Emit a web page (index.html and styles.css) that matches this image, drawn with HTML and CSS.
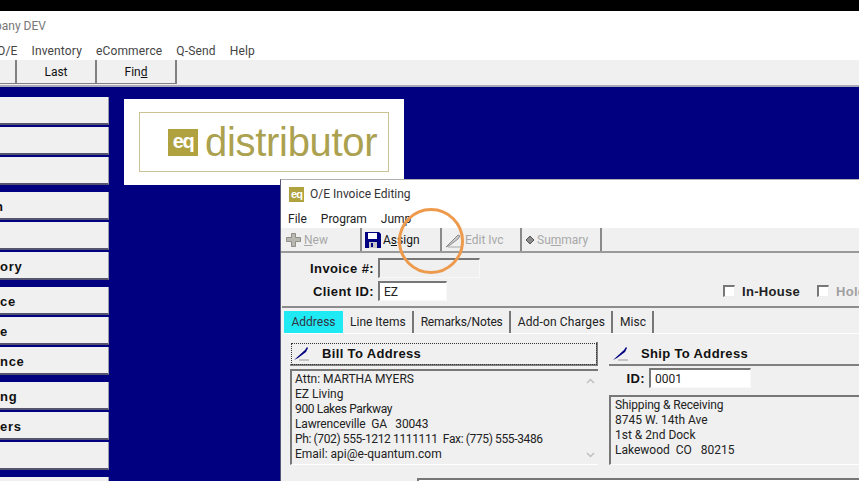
FILE: index.html
```html
<!DOCTYPE html>
<html lang="en">
<head>
    <meta charset="UTF-8">
    <meta name="viewport" content="width=device-width, initial-scale=1.0">
    <title>O/E Invoice Editing</title>
    <link rel="stylesheet" href="styles.css">
</head>
<body>

<div class="topbar"></div>
<div class="app-title">pany DEV</div>
<div class="app-menu">
    <span class="menu-oe">O/E</span>
    <span>Inventory</span>
    <span>eCommerce</span>
    <span>Q-Send</span>
    <span>Help</span>
</div>
<div class="app-toolbar">
    <a class="tool tool-cut"></a>
    <a class="tool">Last</a>
    <a class="tool">Fin<u>d</u></a>
</div>

<div class="desktop">
    <div class="sidebar">
        <div class="side-group">
            <a class="side-button"></a>
            <a class="side-button"></a>
            <a class="side-button"></a>
        </div>
        <div class="side-group">
            <a class="side-button side-n">n</a>
            <a class="side-button"></a>
            <a class="side-button">ory</a>
        </div>
        <div class="side-group">
            <a class="side-button">ce</a>
            <a class="side-button">e</a>
            <a class="side-button">nce</a>
        </div>
        <div class="side-group">
            <a class="side-button">ng</a>
            <a class="side-button">ers</a>
            <a class="side-button"></a>
        </div>
        <div class="side-group">
            <a class="side-button"></a>
        </div>
    </div>

    <div class="logo-card">
        <div class="logo-frame">
            <span class="eq-mark">eq</span>
            <span class="logo-word">distributor</span>
        </div>
    </div>

    <div class="window">
        <div class="win-title">
            <span class="eq-mark eq-small">eq</span>
            <span>O/E Invoice Editing</span>
        </div>
        <div class="win-menu">
            <span>File</span>
            <span>Program</span>
            <span>Jump</span>
        </div>
        <div class="win-toolbar">
            <a class="win-tool disabled">
                <svg width="17" height="16" viewBox="0 0 17 16"><path d="M6.500 1.500h4v4h5v4h-5v5h-4v-5h-5v-4h5z" fill="#b8b8b0" stroke="#8f8f88" stroke-linejoin="round"/></svg>
                <span><u>N</u>ew</span>
            </a>
            <a class="win-tool">
                <svg width="16" height="16" viewBox="0 0 16 16"><path d="M0 0h14l2 2v14H0z" fill="#000080"/><path d="M3 1h9v6H3z" fill="#fff"/><path d="M4 10h8v6H4z" fill="#c8c8c8"/><path d="M6 11h2v4H6z" fill="#000080"/></svg>
                <span>A<u>s</u>sign</span>
            </a>
            <a class="win-tool disabled">
                <svg width="18" height="16" viewBox="0 0 18 16"><path d="M1 15L13 3l2 1-2 3-8 6z" fill="#c8c8c4" stroke="#8c8c8c"/><path d="M3 15h14" stroke="#a8a8a8"/></svg>
                <span>Edit Ivc</span>
            </a>
            <a class="win-tool disabled">
                <svg width="10" height="10" viewBox="0 0 10 10"><path d="M5 1l4 4-4 4-4-4z" fill="#8c8c8c" stroke="#555"/></svg>
                <span>Su<u>m</u>mary</span>
            </a>
        </div>

        <div class="win-body">
            <div class="head-fields">
                <div class="field-col">
                    <div class="field-row">
                        <label class="field-label">Invoice #:</label>
                        <div class="input input-invoice"></div>
                    </div>
                    <div class="field-row">
                        <label class="field-label">Client ID:</label>
                        <div class="input input-client">EZ</div>
                    </div>
                </div>
                <div class="checks">
                    <label class="check"><span class="box"></span>In-House</label>
                    <label class="check check-off"><span class="box"></span>Hold</label>
                </div>
            </div>

            <div class="tabs">
                <span class="tab tab-active">Address</span>
                <span class="tab">Line Items</span>
                <span class="tab tab-narrow">Remarks/Notes</span>
                <span class="tab tab-wide">Add-on Charges</span>
                <span class="tab">Misc</span>
            </div>

            <div class="panel">
                <div class="address-col bill-col">
                    <a class="addr-button focused">
                        <svg class="pen" width="18" height="15" viewBox="0 0 18 15"><path d="M1 14L12 4l2-3 1 1-2 4-8 6z" fill="#000080"/><path d="M6 14h10" stroke="#9a9a9a"/></svg>
                        <span>Bill To Address</span>
                    </a>
                    <div class="memo memo-bill">
                        <div>Attn: MARTHA MYERS<br>EZ Living<br><span class="tight">900 Lakes Parkway</span><br><span class="tight-less">Lawrenceville&nbsp; GA &nbsp; 30043</span><br><span class="tight-most">Ph: (702) 555-1212 1111111&nbsp; Fax: (775) 555-3486</span><br>Email: api@e-quantum.com</div>
                        <div class="memo-scroll">
                            <svg width="9" height="6" viewBox="0 0 9 6"><path d="M1 5l3.500-3.500L8 5" fill="none" stroke="#c0c0c0" stroke-width="1.500"/></svg>
                            <svg width="9" height="6" viewBox="0 0 9 6"><path d="M1 1l3.500 3.500L8 1" fill="none" stroke="#c0c0c0" stroke-width="1.500"/></svg>
                        </div>
                    </div>
                </div>
                <div class="address-col ship-col">
                    <a class="addr-button">
                        <svg class="pen" width="18" height="15" viewBox="0 0 18 15"><path d="M1 14L12 4l2-3 1 1-2 4-8 6z" fill="#000080"/><path d="M6 14h10" stroke="#9a9a9a"/></svg>
                        <span>Ship To Address</span>
                    </a>
                    <div class="field-row ship-id">
                        <label class="field-label">ID:</label>
                        <div class="input input-ship">0001</div>
                    </div>
                    <div class="memo memo-ship"><span class="tight-less">Shipping &amp; Receiving</span><br>8745 W. 14th Ave<br>1st &amp; 2nd Dock<br>Lakewood&nbsp; CO &nbsp; 80215</div>
                </div>
            </div>

            <div class="bottom-row">
                <div class="bottom-box"></div>
            </div>
        </div>
    </div>

    <div class="click-ring"></div>
</div>

</body>
</html>
```

FILE: styles.css
```css
html, body {
    height: 100%;
}
body {
    margin: 0;
    height: 481px;
    overflow: hidden;
    background-color: #000080;
    font-family: Roboto, Arial, sans-serif;
    font-size: 12px;
    color: #222;
}
.topbar {
    height: 11px;
    background: #000;
}
.app-title {
    height: 29px;
    line-height: 30px;
    background: white;
    color: #777;
    font-size: 12px;
    text-indent: -5px;
}
.app-menu {
    height: 20px;
    line-height: 22px;
    background: white;
    display: flex;
    gap: 14px;
    color: #444;
    letter-spacing: 0.15px;
}
.menu-oe {
    margin-left: -3px;
}
.app-toolbar {
    height: 25px;
    display: flex;
    background: #f0f0f0;
    border-bottom: 2px solid #a8a8b8;
}
.tool {
    width: 80px;
    height: 24px;
    line-height: 25px;
    text-align: center;
    color: #111;
    border-right: 2px solid #808080;
    border-bottom: 1px solid #808080;
    box-sizing: border-box;
}
.tool-cut {
    width: 17px;
}
.desktop {
    position: relative;
    display: flex;
    height: 394px;
}
.sidebar {
    width: 109px;
    padding-top: 10px;
    display: flex;
    flex-direction: column;
    gap: 7px;
}
.side-group {
    display: flex;
    flex-direction: column;
    gap: 2px;
}
.side-button {
    display: block;
    box-sizing: border-box;
    height: 28px;
    line-height: 29px;
    background: #f0f0f0;
    border-right: 1px solid #9a9aa8;
    border-bottom: 2px solid #55556f;
    font-family: "Liberation Sans", Arial, sans-serif;
    font-weight: bold;
    font-size: 13px;
    letter-spacing: 0.7px;
    color: #111;
}
.side-n {
    text-indent: -5px;
}
.logo-card {
    margin: 12px 0 0 15px;
    width: 280px;
    height: 86px;
    background: white;
    padding: 13px 15px;
    box-sizing: border-box;
}
.logo-frame {
    box-sizing: border-box;
    width: 250px;
    height: 60px;
    border: 1px solid #c8c294;
    display: flex;
    align-items: center;
    padding-left: 28px;
    gap: 7px;
}
.eq-mark {
    width: 30px;
    height: 27px;
    background: #b0a23f;
    color: white;
    font-family: "Liberation Sans", Arial, sans-serif;
    font-weight: bold;
    font-size: 20px;
    line-height: 25px;
    text-align: center;
    letter-spacing: -1.500px;
}
.logo-word {
    font-family: "Liberation Sans", Arial, sans-serif;
    font-size: 40px;
    letter-spacing: -0.3px;
    color: #aba14f;
}
.eq-small {
    width: 15px;
    height: 15px;
    font-size: 11px;
    line-height: 14px;
    letter-spacing: -0.8px;
}

/* invoice window sits over the desktop */
.window {
    position: absolute;
    left: 280px;
    top: 92px;
    width: 640px;
    height: 320px;
    background: #f0f0f0;
    border-left: 1px solid #55557a;
    border-top: 1px solid #b0b0b0;
}
.win-title {
    height: 28px;
    background: white;
    display: flex;
    align-items: center;
    gap: 6px;
    padding-left: 8px;
    color: #333;
}
.win-menu {
    height: 20px;
    line-height: 23px;
    background: white;
    display: flex;
    gap: 14px;
    padding-left: 7px;
    color: #222;
}
.win-toolbar {
    height: 25px;
    display: flex;
    padding-left: 1px;
    box-sizing: border-box;
    border-bottom: 2px solid #9a9a9a;
}
.win-tool {
    width: 80px;
    box-sizing: border-box;
    display: flex;
    align-items: center;
    gap: 2px;
    padding: 1px 0 0 3px;
    border-right: 2px solid #8a8a8a;
    color: #111;
}
.win-tool.disabled {
    color: #a8a8a8;
}
.win-body {
    padding: 0 0 0 1px;
}
.head-fields {
    height: 55px;
    display: flex;
    box-sizing: border-box;
    padding-top: 5px;
    border-bottom: 2px solid #8c8c8c;
}
.field-col {
    width: 441px;
    display: flex;
    flex-direction: column;
    gap: 3px;
}
.field-row {
    display: flex;
    align-items: center;
    gap: 4px;
}
.field-label {
    width: 92px;
    text-align: right;
    font-family: "Liberation Sans", Arial, sans-serif;
    font-weight: bold;
    font-size: 13px;
    letter-spacing: 0.4px;
    color: #111;
}
.input {
    box-sizing: border-box;
    height: 20px;
    line-height: 18px;
    padding-left: 4px;
    border: 1px solid #f8f8f8;
    border-top: 2px solid #777;
    border-left: 2px solid #777;
    background: white;
    color: #222;
}
.input-invoice {
    width: 102px;
    background: #f0f0f0;
}
.input-client {
    width: 69px;
}
.checks {
    display: flex;
    gap: 17px;
    padding-top: 26px;
}
.check {
    display: flex;
    align-items: center;
    gap: 7px;
    height: 14px;
    font-family: "Liberation Sans", Arial, sans-serif;
    font-weight: bold;
    font-size: 13px;
    letter-spacing: 0.3px;
    color: #222;
}
.check-off {
    color: #a0a0a0;
}
.box {
    width: 12px;
    height: 12px;
    box-sizing: border-box;
    background: white;
    border: 1px solid #eee;
    border-top: 2px solid #777;
    border-left: 2px solid #777;
}
.tabs {
    height: 26px;
    display: flex;
    padding: 3px 0 0 2px;
    box-sizing: border-box;
    gap: 1px;
    border-bottom: 1px solid white;
}
.tab {
    box-sizing: border-box;
    padding: 0 6px;
    height: 22px;
    line-height: 22px;
    border-right: 2px solid #777;
    color: #222;
}
.tab-narrow {
    letter-spacing: -0.15px;
}
.tab-wide {
    letter-spacing: 0.15px;
}
.tab-active {
    width: 59px;
    background: #1fe9f2;
    color: #334;
    text-align: center;
    padding: 0;
    border: 0;
}
.panel {
    display: flex;
    gap: 11px;
    padding: 8px 0 0 8px;
}
.address-col {
    display: flex;
    flex-direction: column;
}
.bill-col {
    width: 308px;
    gap: 3px;
}
.ship-col {
    width: 300px;
}
.addr-button {
    box-sizing: border-box;
    height: 24px;
    display: flex;
    align-items: center;
    gap: 11px;
    padding-left: 3px;
    border-bottom: 2px solid #808080;
    border-right: 2px solid #808080;
    font-family: "Liberation Sans", Arial, sans-serif;
    font-weight: bold;
    font-size: 13px;
    letter-spacing: 0.35px;
    color: #111;
}
.focused {
    outline: 1px dotted #333;
    outline-offset: -2px;
}
.pen {
    flex-shrink: 0;
}
.memo {
    box-sizing: border-box;
    border-top: 2px solid #777;
    border-left: 2px solid #777;
    border-bottom: 1px solid white;
    padding: 1px 0 0 3px;
    line-height: 15px;
    color: #222;
}
.memo-bill {
    height: 96px;
    display: flex;
    justify-content: space-between;
}
.memo-ship {
    height: 70px;
    padding-left: 4px;
}
.tight {
    letter-spacing: -0.35px;
}
.tight-less {
    letter-spacing: -0.15px;
}
.tight-most {
    letter-spacing: -0.37px;
}
.memo-scroll {
    width: 16px;
    display: flex;
    flex-direction: column;
    justify-content: space-between;
    align-items: center;
    padding: 6px 0 6px;
    box-sizing: border-box;
}
.ship-id {
    height: 24px;
    margin-bottom: 5px;
    gap: 4px;
}
.ship-id .field-label {
    width: 36px;
}
.input-ship {
    width: 102px;
}
.bottom-row {
    padding: 13px 0 0 135px;
}
.bottom-box {
    height: 20px;
    background: white;
    border-top: 2px solid #777;
    border-left: 2px solid #777;
}
.click-ring {
    position: absolute;
    left: 398px;
    top: 121px;
    width: 66px;
    height: 66px;
    box-sizing: border-box;
    border: 3px solid #ee9a4d;
    border-radius: 50%;
}
```
